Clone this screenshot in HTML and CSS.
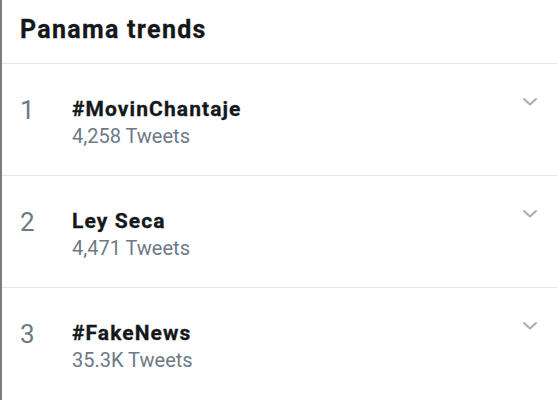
FILE: index.html
```html
<!DOCTYPE html>
<html>
<head>
<meta charset="utf-8">
<link rel="stylesheet" href="styles.css">
</head>
<body>
<div class="panel">
  <div class="header">Panama trends</div>
  <div class="row">
    <div class="rank">1</div>
    <div class="info">
      <div class="title">#MovinChantaje</div>
      <div class="count">4,258 Tweets</div>
    </div>
    <svg class="chev" width="16" height="10" viewBox="0 0 16 10"><path d="M2 2 L8 7.5 L14 2" fill="none" stroke="#a3afb9" stroke-width="2" stroke-linecap="round" stroke-linejoin="round"/></svg>
  </div>
  <div class="row">
    <div class="rank">2</div>
    <div class="info">
      <div class="title">Ley Seca</div>
      <div class="count">4,471 Tweets</div>
    </div>
    <svg class="chev" width="16" height="10" viewBox="0 0 16 10"><path d="M2 2 L8 7.5 L14 2" fill="none" stroke="#a3afb9" stroke-width="2" stroke-linecap="round" stroke-linejoin="round"/></svg>
  </div>
  <div class="row last">
    <div class="rank">3</div>
    <div class="info">
      <div class="title">#FakeNews</div>
      <div class="count">35.3K Tweets</div>
    </div>
    <svg class="chev" width="16" height="10" viewBox="0 0 16 10"><path d="M2 2 L8 7.5 L14 2" fill="none" stroke="#a3afb9" stroke-width="2" stroke-linecap="round" stroke-linejoin="round"/></svg>
  </div>
</div>
</body>
</html>
```
FILE: styles.css
```css
html, body {
  margin: 0;
  padding: 0;
  background: #ffffff;
}
body {
  font-family: Roboto, "Noto Sans", sans-serif;
  width: 557px;
  height: 400px;
  overflow: hidden;
}
.panel {
  border-left: 2px solid #7d7d7d;
  height: 400px;
  box-sizing: border-box;
}
.header {
  height: 64px;
  box-sizing: border-box;
  padding: 15px 0 0 18px;
  font-size: 25px;
  line-height: 30px;
  font-weight: 700;
  letter-spacing: 1.3px;
  -webkit-text-stroke: 0.3px #15181b;
  color: #15181b;
  border-bottom: 1px solid #e3e6e8;
}
.row {
  display: flex;
  align-items: flex-start;
  height: 112px;
  box-sizing: border-box;
  padding: 33px 0 0 18px;
  border-bottom: 1px solid #e3e6e8;
}
.row.last {
  border-bottom: none;
}
.rank {
  width: 52px;
  font-size: 26px;
  line-height: 24px;
  margin-top: 1px;
  color: #6c7a86;
}
.info {
  flex: 1;
}
.title {
  font-size: 21px;
  line-height: 24px;
  font-weight: 700;
  letter-spacing: 1.1px;
  -webkit-text-stroke: 0.3px #15181b;
  color: #15181b;
}
.count {
  margin-top: 3px;
  font-size: 20px;
  line-height: 24px;
  color: #6c7a86;
}
.chev {
  margin: 0 19px 0 0;
}
```
